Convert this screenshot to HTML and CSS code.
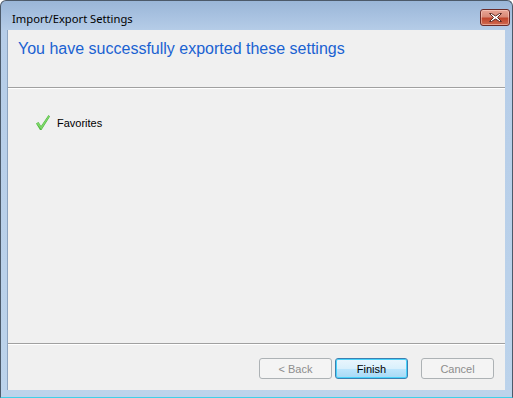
FILE: index.html
```html
<!DOCTYPE html>
<html>
<head>
<meta charset="utf-8">
<link rel="stylesheet" href="styles.css">
</head>
<body>
<div class="window">
  <div class="titlebar">
    <span class="title">Import/Export Settings</span>
    <button class="close" aria-label="Close">
      <svg width="15" height="9" viewBox="0 0 15 9">
        <path d="M3.5 0.5 L7.5 3 L11.5 0.5 L13.5 0.5 L9.5 4.5 L13.5 8.5 L11.5 8.5 L7.5 6 L3.5 8.5 L1.5 8.5 L5.5 4.5 L1.5 0.5 Z" fill="#fff" stroke="#5a2a24" stroke-width="1" stroke-linejoin="round"/>
      </svg>
    </button>
  </div>
  <div class="client">
    <div class="header">
      <h1 class="heading">You have successfully exported these settings</h1>
    </div>
    <div class="body">
      <div class="item">
        <svg class="check" width="16" height="17" viewBox="0 0 16 17">
          <path d="M1 9.5 L3.5 8 L6 12 L13.5 1 L15 2.5 L6.5 16 L5 16 Z" fill="#4fb83e"/>
          <path d="M1.5 9.6 L3.4 8.6 L6 12.8 L13.6 1.8 L14.4 2.6 L6.3 15.2 Z" fill="#7fd86a"/>
        </svg>
        <span class="label">Favorites</span>
      </div>
    </div>
    <div class="footer">
      <button class="btn disabled">&lt; Back</button>
      <button class="btn primary">Finish</button>
      <button class="btn disabled cancel">Cancel</button>
    </div>
  </div>
</div>
</body>
</html>
```

FILE: styles.css
```css
html, body {
  margin: 0;
  padding: 0;
  background: #ffffff;
}
.window {
  width: 513px;
  height: 398px;
  box-sizing: border-box;
  border: 1px solid #4c5a6a;
  border-bottom-color: #3fd0e8;
  border-radius: 6px 6px 0 0;
  background: linear-gradient(to bottom, #9ab6d8 0px, #b6cde8 30px, #bcd3eb 100%);
  display: flex;
  flex-direction: column;
  padding: 0 7px 7px 6px;
}
.titlebar {
  height: 29px;
  display: flex;
  align-items: flex-start;
  justify-content: space-between;
  flex: none;
}
.title {
  font-family: "Noto Sans", "Open Sans", sans-serif;
  font-size: 11.2px;
  color: #000;
  margin: 10px 0 0 5px;
  line-height: 16px;
}
.close {
  width: 30px;
  height: 17px;
  margin: 8px -5px 0 0;
  padding: 0;
  border: 1px solid #6b2b28;
  border-radius: 3px;
  background: linear-gradient(to bottom, #e8a596 0%, #d88a78 45%, #c0452c 55%, #d06a50 100%);
  box-shadow: inset 0 0 0 1px rgba(255, 220, 210, 0.5);
  display: flex;
  align-items: center;
  justify-content: center;
}
.client {
  flex: 1;
  background: #f0f0f0;
  border-left: 1px solid #8da4c0;
  display: flex;
  flex-direction: column;
}
.header {
  height: 58px;
  border-bottom: 1px solid #a0a0a0;
  box-shadow: 0 1px 0 #ffffff;
  box-sizing: border-box;
  flex: none;
}
.heading {
  margin: 0;
  padding: 9px 0 0 10px;
  font-family: "Liberation Sans", Arial, sans-serif;
  font-weight: normal;
  font-size: 16px;
  line-height: 20px;
  color: #1a62d2;
}
.body {
  flex: 1;
  padding: 26px 0 0 27px;
}
.item {
  display: flex;
  align-items: center;
  gap: 6px;
}
.check {
  display: block;
}
.label {
  font-family: "Liberation Sans", Arial, sans-serif;
  font-size: 11px;
  color: #000;
}
.footer {
  height: 47px;
  flex: none;
  border-top: 1px solid #a0a0a0;
  box-shadow: inset 0 1px 0 #ffffff;
  box-sizing: border-box;
  display: flex;
  justify-content: flex-end;
  align-items: flex-start;
  padding: 14px 11px 0 0;
  gap: 0;
}
.btn {
  width: 73px;
  height: 21px;
  box-sizing: border-box;
  font-family: "Liberation Sans", Arial, sans-serif;
  font-size: 11px;
  border-radius: 3px;
  padding: 0;
  margin-left: 3px;
}
.btn.disabled {
  border: 1px solid #adb2b5;
  background: #f4f4f4;
  color: #8d8d8d;
}
.btn.primary {
  border: 1px solid #3c7fb1;
  background: linear-gradient(to bottom, #eaf6fd 0%, #d9f0fc 50%, #bee6fd 51%, #a7d9f5 100%);
  box-shadow: inset 0 0 0 1px #48d3fb;
  color: #000;
}
.btn.cancel {
  margin-left: 13px;
}
```
